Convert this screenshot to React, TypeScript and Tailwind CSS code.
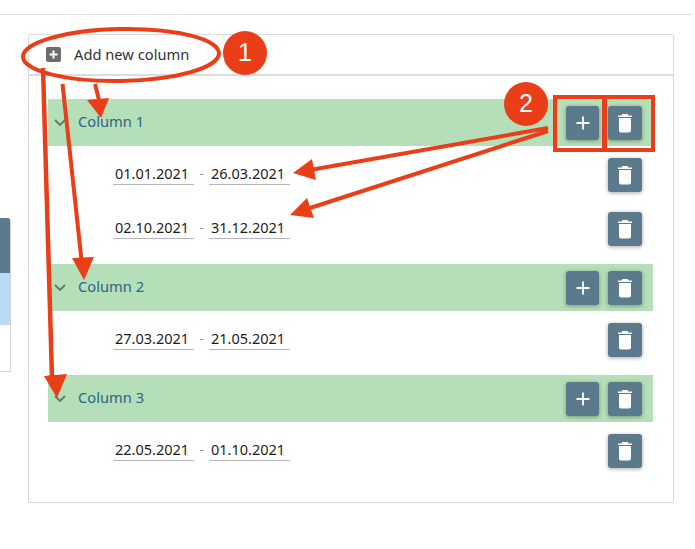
const font = { fontFamily: '"Noto Sans", sans-serif' };

function TrashIcon() {
  return (
    <svg width="24" height="24" viewBox="0 0 24 24" fill="#fff">
      <path d="M6 19.500c0 1.100.9 2 2 2h8c1.100 0 2-.9 2-2V7H6v12.500zM19 4.500h-3.500l-1-1.500h-5l-1 1.500H5V6h14V4.500z" />
    </svg>
  );
}

function PlusIcon() {
  return (
    <svg width="16" height="16" viewBox="0 0 16 16" stroke="#fff" strokeWidth="1.8" fill="none">
      <path d="M8 1.500v13M1.500 8h13" />
    </svg>
  );
}

function IconButton({ kind }: { kind: "add" | "delete" }) {
  return (
    <button
      type="button"
      className={`flex h-[34px] items-center justify-center rounded-[3px] bg-[#5b7a8c] shadow-[0_1px_4px_rgba(0,0,0,0.35)] ${
        kind === "add" ? "w-[33px]" : "w-[34px]"
      }`}
    >
      {kind === "add" ? <PlusIcon /> : <TrashIcon />}
    </button>
  );
}

function DateField({ value }: { value: string }) {
  return (
    <span className="block h-[27px] w-[81px] border-b border-[#b5b5b5] pl-[2px] text-[14.5px] leading-[30px] text-[#1c1c1c]">
      {value}
    </span>
  );
}

function Period({ from, to }: { from: string; to: string }) {
  return (
    <div className="flex h-[34px] items-start pl-[65px] pr-[11px]">
      <div className="flex items-center">
        <DateField value={from} />
        <span className="w-[15px] pt-[4px] text-center text-[13px] text-[#8a8a8a]">-</span>
        <DateField value={to} />
      </div>
      <div className="ml-auto">
        <IconButton kind="delete" />
      </div>
    </div>
  );
}

function ColumnGroup({ name, periods, last }: { name: string; periods: string[][]; last?: boolean }) {
  return (
    <section>
      <div className="flex h-[47px] items-center bg-[#b5dfb8] pr-[11px]">
        <svg className="ml-[6px]" width="12" height="8" viewBox="0 0 12 8" fill="none" stroke="#5f7a68" strokeWidth="1.8">
          <path d="M1 1l5 5 5-5" />
        </svg>
        <span className="ml-[12px] pb-[3px] text-[14.7px] text-[#2f6384]">{name}</span>
        <div className="ml-auto flex gap-[9px]">
          <IconButton kind="add" />
          <IconButton kind="delete" />
        </div>
      </div>
      <div className={`flex flex-col gap-[20px] pt-[12px] ${last ? "pb-[34px]" : "pb-[18px]"}`}>
        {periods.map(([from, to]) => (
          <Period key={from} from={from} to={to} />
        ))}
      </div>
    </section>
  );
}

function Annotations() {
  const red = "#e93e17";
  return (
    <>
      <svg className="absolute left-0 top-0" width="695" height="549" viewBox="0 0 695 549" fill="none">
        <ellipse cx="121" cy="55" rx="98" ry="26" stroke={red} strokeWidth="4" transform="rotate(-1 121 55)" />
        <rect x="555" y="97" width="98" height="53" stroke={red} strokeWidth="4" />
        <path d="M604.500 97v53" stroke={red} strokeWidth="5" />
        <g stroke={red} strokeWidth="4">
          <path d="M95 84l4 16" />
          <path d="M62.500 84l19 176" />
          <path d="M43 68l9 310" strokeWidth="4.500" />
        </g>
        <path d="M548 128L310 170" stroke={red} strokeWidth="4" />
        <path d="M548 131L310 208" stroke={red} strokeWidth="4" />
        <g fill={red}>
          <path d="M87 100l22-2-8 20z" />
          <path d="M72 258l22-1-10 23z" />
          <path d="M44 376l23-2-10 24z" />
          <path d="M293 173l19-14 4 21z" />
          <path d="M290 215l17-17 7 20z" />
        </g>
      </svg>
      <span
        className="absolute left-[223px] top-[31px] flex h-[44px] w-[44px] items-center justify-center rounded-full bg-[#e93e17] text-[25px] text-white"
        style={{ fontFamily: '"Liberation Sans", sans-serif' }}
      >
        1
      </span>
      <span
        className="absolute left-[504px] top-[82px] flex h-[44px] w-[44px] items-center justify-center rounded-full bg-[#e93e17] text-[25px] text-white"
        style={{ fontFamily: '"Liberation Sans", sans-serif' }}
      >
        2
      </span>
    </>
  );
}

export default function App() {
  return (
    <div className="relative h-[549px] w-[695px] overflow-hidden bg-white" style={font}>
      <div className="h-[15px] w-[693px] border-b border-[#e2e2e2]" />
      <div className="flex">
        <div className="mt-[203px] h-[154px] w-[11px] shrink-0 overflow-hidden rounded-tr-[3px] border-r border-b border-[#d5d5d5]">
          <div className="h-[55px] bg-[#5b7a8c]" />
          <div className="h-[52px] bg-[#b9d9f5]" />
        </div>
        <div className="ml-[17px] mt-[19px] w-[646px]">
          <div className="flex h-[42px] items-center rounded-t-[2px] border border-[#dcdcdc] border-b-2 pl-[17px]">
            <span className="flex h-[15px] w-[15px] items-center justify-center rounded-[2px] bg-[#6d6d6d]">
              <svg width="9" height="9" viewBox="0 0 9 9" stroke="#fff" strokeWidth="2" fill="none">
                <path d="M4.500 0.500v8M0.500 4.500h8" />
              </svg>
            </span>
            <span className="ml-[13px] text-[14.7px] text-[#333]">Add new column</span>
          </div>
          <div className="rounded-b-[2px] border border-t-0 border-[#d5d5d5] pl-[19px] pr-[20px] pt-[23px]">
            <ColumnGroup
              name="Column 1"
              periods={[
                ["01.01.2021", "26.03.2021"],
                ["02.10.2021", "31.12.2021"],
              ]}
            />
            <ColumnGroup name="Column 2" periods={[["27.03.2021", "21.05.2021"]]} />
            <ColumnGroup name="Column 3" periods={[["22.05.2021", "01.10.2021"]]} last />
          </div>
        </div>
      </div>
      <Annotations />
    </div>
  );
}
